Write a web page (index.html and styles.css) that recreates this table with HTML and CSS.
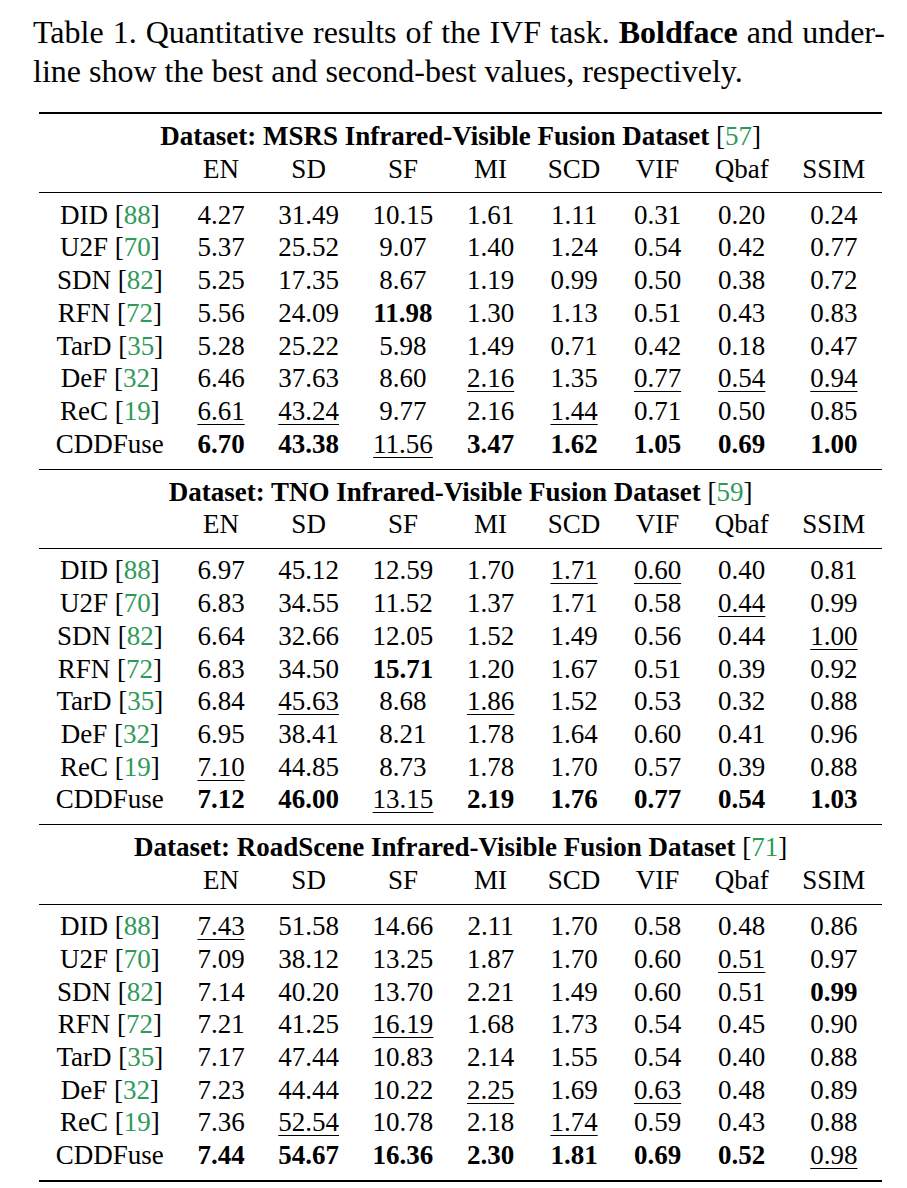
FILE: index.html
```html
<!DOCTYPE html>
<html>
<head>
<meta charset="utf-8">
<title>Table 1</title>
<link rel="stylesheet" href="styles.css">
</head>
<body>
<div class="page">
  <div class="caption">
    <div class="cap-line1">Table 1. Quantitative results of the IVF task. <b>Boldface</b> and under-</div>
    <div class="cap-line2">line show the best and second-best values, respectively.</div>
  </div>
  <table class="results">
    <tbody class="sec sec-first">
      <tr class="sec-title"><th colspan="9">Dataset: MSRS Infrared-Visible Fusion Dataset <span class="ref">[<span class="cite">57</span>]</span></th></tr>
      <tr class="col-head"><th></th><th>EN</th><th>SD</th><th>SF</th><th>MI</th><th>SCD</th><th>VIF</th><th>Qbaf</th><th>SSIM</th></tr>
      <tr class="row-first"><td>DID [<span class="cite">88</span>]</td><td>4.27</td><td>31.49</td><td>10.15</td><td>1.61</td><td>1.11</td><td>0.31</td><td>0.20</td><td>0.24</td></tr>
      <tr><td>U2F [<span class="cite">70</span>]</td><td>5.37</td><td>25.52</td><td>9.07</td><td>1.40</td><td>1.24</td><td>0.54</td><td>0.42</td><td>0.77</td></tr>
      <tr><td>SDN [<span class="cite">82</span>]</td><td>5.25</td><td>17.35</td><td>8.67</td><td>1.19</td><td>0.99</td><td>0.50</td><td>0.38</td><td>0.72</td></tr>
      <tr><td>RFN [<span class="cite">72</span>]</td><td>5.56</td><td>24.09</td><td class="best">11.98</td><td>1.30</td><td>1.13</td><td>0.51</td><td>0.43</td><td>0.83</td></tr>
      <tr><td>TarD [<span class="cite">35</span>]</td><td>5.28</td><td>25.22</td><td>5.98</td><td>1.49</td><td>0.71</td><td>0.42</td><td>0.18</td><td>0.47</td></tr>
      <tr><td>DeF [<span class="cite">32</span>]</td><td>6.46</td><td>37.63</td><td>8.60</td><td><u class="second">2.16</u></td><td>1.35</td><td><u class="second">0.77</u></td><td><u class="second">0.54</u></td><td><u class="second">0.94</u></td></tr>
      <tr><td>ReC [<span class="cite">19</span>]</td><td><u class="second">6.61</u></td><td><u class="second">43.24</u></td><td>9.77</td><td>2.16</td><td><u class="second">1.44</u></td><td>0.71</td><td>0.50</td><td>0.85</td></tr>
      <tr class="row-last"><td>CDDFuse</td><td class="best">6.70</td><td class="best">43.38</td><td><u class="second">11.56</u></td><td class="best">3.47</td><td class="best">1.62</td><td class="best">1.05</td><td class="best">0.69</td><td class="best">1.00</td></tr>
    </tbody>
    <tbody class="sec">
      <tr class="sec-title"><th colspan="9">Dataset: TNO Infrared-Visible Fusion Dataset <span class="ref">[<span class="cite">59</span>]</span></th></tr>
      <tr class="col-head"><th></th><th>EN</th><th>SD</th><th>SF</th><th>MI</th><th>SCD</th><th>VIF</th><th>Qbaf</th><th>SSIM</th></tr>
      <tr class="row-first"><td>DID [<span class="cite">88</span>]</td><td>6.97</td><td>45.12</td><td>12.59</td><td>1.70</td><td><u class="second">1.71</u></td><td><u class="second">0.60</u></td><td>0.40</td><td>0.81</td></tr>
      <tr><td>U2F [<span class="cite">70</span>]</td><td>6.83</td><td>34.55</td><td>11.52</td><td>1.37</td><td>1.71</td><td>0.58</td><td><u class="second">0.44</u></td><td>0.99</td></tr>
      <tr><td>SDN [<span class="cite">82</span>]</td><td>6.64</td><td>32.66</td><td>12.05</td><td>1.52</td><td>1.49</td><td>0.56</td><td>0.44</td><td><u class="second">1.00</u></td></tr>
      <tr><td>RFN [<span class="cite">72</span>]</td><td>6.83</td><td>34.50</td><td class="best">15.71</td><td>1.20</td><td>1.67</td><td>0.51</td><td>0.39</td><td>0.92</td></tr>
      <tr><td>TarD [<span class="cite">35</span>]</td><td>6.84</td><td><u class="second">45.63</u></td><td>8.68</td><td><u class="second">1.86</u></td><td>1.52</td><td>0.53</td><td>0.32</td><td>0.88</td></tr>
      <tr><td>DeF [<span class="cite">32</span>]</td><td>6.95</td><td>38.41</td><td>8.21</td><td>1.78</td><td>1.64</td><td>0.60</td><td>0.41</td><td>0.96</td></tr>
      <tr><td>ReC [<span class="cite">19</span>]</td><td><u class="second">7.10</u></td><td>44.85</td><td>8.73</td><td>1.78</td><td>1.70</td><td>0.57</td><td>0.39</td><td>0.88</td></tr>
      <tr class="row-last"><td>CDDFuse</td><td class="best">7.12</td><td class="best">46.00</td><td><u class="second">13.15</u></td><td class="best">2.19</td><td class="best">1.76</td><td class="best">0.77</td><td class="best">0.54</td><td class="best">1.03</td></tr>
    </tbody>
    <tbody class="sec sec-last">
      <tr class="sec-title"><th colspan="9">Dataset: RoadScene Infrared-Visible Fusion Dataset <span class="ref">[<span class="cite">71</span>]</span></th></tr>
      <tr class="col-head"><th></th><th>EN</th><th>SD</th><th>SF</th><th>MI</th><th>SCD</th><th>VIF</th><th>Qbaf</th><th>SSIM</th></tr>
      <tr class="row-first"><td>DID [<span class="cite">88</span>]</td><td><u class="second">7.43</u></td><td>51.58</td><td>14.66</td><td>2.11</td><td>1.70</td><td>0.58</td><td>0.48</td><td>0.86</td></tr>
      <tr><td>U2F [<span class="cite">70</span>]</td><td>7.09</td><td>38.12</td><td>13.25</td><td>1.87</td><td>1.70</td><td>0.60</td><td><u class="second">0.51</u></td><td>0.97</td></tr>
      <tr><td>SDN [<span class="cite">82</span>]</td><td>7.14</td><td>40.20</td><td>13.70</td><td>2.21</td><td>1.49</td><td>0.60</td><td>0.51</td><td class="best">0.99</td></tr>
      <tr><td>RFN [<span class="cite">72</span>]</td><td>7.21</td><td>41.25</td><td><u class="second">16.19</u></td><td>1.68</td><td>1.73</td><td>0.54</td><td>0.45</td><td>0.90</td></tr>
      <tr><td>TarD [<span class="cite">35</span>]</td><td>7.17</td><td>47.44</td><td>10.83</td><td>2.14</td><td>1.55</td><td>0.54</td><td>0.40</td><td>0.88</td></tr>
      <tr><td>DeF [<span class="cite">32</span>]</td><td>7.23</td><td>44.44</td><td>10.22</td><td><u class="second">2.25</u></td><td>1.69</td><td><u class="second">0.63</u></td><td>0.48</td><td>0.89</td></tr>
      <tr><td>ReC [<span class="cite">19</span>]</td><td>7.36</td><td><u class="second">52.54</u></td><td>10.78</td><td>2.18</td><td><u class="second">1.74</u></td><td>0.59</td><td>0.43</td><td>0.88</td></tr>
      <tr class="row-last"><td>CDDFuse</td><td class="best">7.44</td><td class="best">54.67</td><td class="best">16.36</td><td class="best">2.30</td><td class="best">1.81</td><td class="best">0.69</td><td class="best">0.52</td><td><u class="second">0.98</u></td></tr>
    </tbody>
  </table>
</div>
</body>
</html>
```

FILE: styles.css
```css
html, body {
  margin: 0;
  padding: 0;
  background: #ffffff;
}

body {
  font-family: "Liberation Serif", "Times New Roman", serif;
  color: #000000;
}

.page {
  width: 852px;
  padding: 13px 0 0 33px;
}

.caption {
  font-size: 32px;
  line-height: 39px;
}

.cap-line1 {
  text-align: justify;
  text-align-last: justify;
  white-space: nowrap;
}

.cap-line2 {
  text-align: left;
  white-space: nowrap;
}

.results {
  margin: 21px 0 0 6px;
  border-collapse: separate;
  border-spacing: 0;
  font-size: 27px;
  line-height: 32.7px;
}

.results th,
.results td {
  padding: 0 16.8px;
  text-align: center;
  white-space: nowrap;
  font-weight: normal;
}

.results .sec-title th {
  font-weight: bold;
  padding-top: 6px;
}

.results .sec-first .sec-title th {
  border-top: 2px solid #000;
}

.results .ref {
  font-weight: normal;
}

.cite {
  color: #2f9a58;
}

.results .col-head th {
  padding-bottom: 7px;
  border-bottom: 1px solid #000;
}

.results .row-first td {
  padding-top: 5.3px;
}

.results .row-last td {
  padding-bottom: 8.4px;
  border-bottom: 1px solid #000;
}

.results .sec-last .row-last td {
  border-bottom-width: 2px;
}

.results td.best {
  font-weight: bold;
}

.second {
  text-decoration: underline;
  text-decoration-thickness: 1px;
  text-underline-offset: 4px;
}
```
